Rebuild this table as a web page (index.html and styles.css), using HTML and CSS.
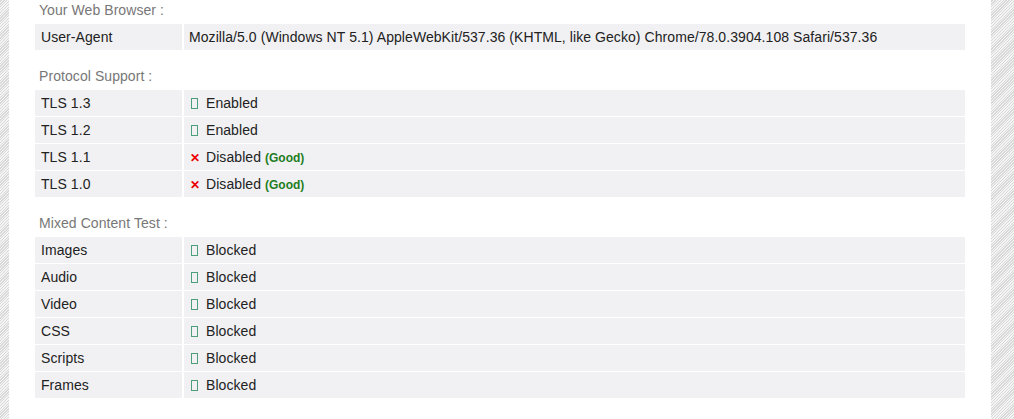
FILE: index.html
```html
<!DOCTYPE html>
<html>
<head>
<meta charset="utf-8">
<link rel="stylesheet" href="styles.css">
</head>
<body>
<div class="page">
  <div class="stripe stripe-left"></div>
  <main class="content">
    <h3 class="section-title">Your Web Browser :</h3>
    <div class="grid">
      <div class="cell label">User-Agent</div>
      <div class="cell value">Mozilla/5.0 (Windows NT 5.1) AppleWebKit/537.36 (KHTML, like Gecko) Chrome/78.0.3904.108 Safari/537.36</div>
    </div>

    <h3 class="section-title">Protocol Support :</h3>
    <div class="grid">
      <div class="cell label">TLS 1.3</div>
      <div class="cell value"><span class="ok"></span>Enabled</div>
      <div class="cell label">TLS 1.2</div>
      <div class="cell value"><span class="ok"></span>Enabled</div>
      <div class="cell label">TLS 1.1</div>
      <div class="cell value"><span class="no">✕</span>Disabled <span class="good">(Good)</span></div>
      <div class="cell label">TLS 1.0</div>
      <div class="cell value"><span class="no">✕</span>Disabled <span class="good">(Good)</span></div>
    </div>

    <h3 class="section-title">Mixed Content Test :</h3>
    <div class="grid">
      <div class="cell label">Images</div>
      <div class="cell value"><span class="ok"></span>Blocked</div>
      <div class="cell label">Audio</div>
      <div class="cell value"><span class="ok"></span>Blocked</div>
      <div class="cell label">Video</div>
      <div class="cell value"><span class="ok"></span>Blocked</div>
      <div class="cell label">CSS</div>
      <div class="cell value"><span class="ok"></span>Blocked</div>
      <div class="cell label">Scripts</div>
      <div class="cell value"><span class="ok"></span>Blocked</div>
      <div class="cell label">Frames</div>
      <div class="cell value"><span class="ok"></span>Blocked</div>
    </div>
  </main>
  <div class="stripe stripe-right"></div>
</div>
</body>
</html>
```

FILE: styles.css
```css
html, body {
  margin: 0;
  padding: 0;
  background: #fff;
}
body {
  font-family: "Liberation Sans", Arial, sans-serif;
  font-size: 14px;
  letter-spacing: 0.07px;
  color: #222;
  overflow: hidden;
}
.page {
  display: flex;
  height: 419px;
}
.stripe {
  flex: none;
  background: repeating-linear-gradient(-45deg, #f4f4f4 0, #f4f4f4 1px, #d9d9d9 1px, #d9d9d9 2px);
}
.stripe-left {
  width: 9px;
}
.stripe-right {
  width: 23px;
}
.content {
  flex: 1;
  padding: 0 26px;
}
.section-title {
  margin: 0 0 4px;
  padding-left: 4px;
  font-size: 14px;
  font-weight: normal;
  line-height: 20px;
  color: #777;
}
.grid {
  display: grid;
  grid-template-columns: 147px 1fr;
  column-gap: 2px;
  row-gap: 1px;
  margin-bottom: 16px;
}
.cell {
  background: #f1f1f3;
  height: 26px;
  line-height: 26px;
  white-space: nowrap;
}
.label {
  padding-left: 6px;
}
.value {
  padding-left: 5px;
}
.ok {
  display: inline-block;
  box-sizing: border-box;
  width: 7px;
  height: 11px;
  border: 1px solid #4d9f7c;
  margin: 0 8px 0 2px;
  vertical-align: -1px;
}
.no {
  display: inline-block;
  width: 11px;
  margin: 0 5px 0 1px;
  color: #e00;
  font-weight: bold;
  font-size: 12px;
}
.good {
  color: #1e7d1e;
  font-weight: bold;
  font-size: 12px;
  letter-spacing: 0;
}
```
